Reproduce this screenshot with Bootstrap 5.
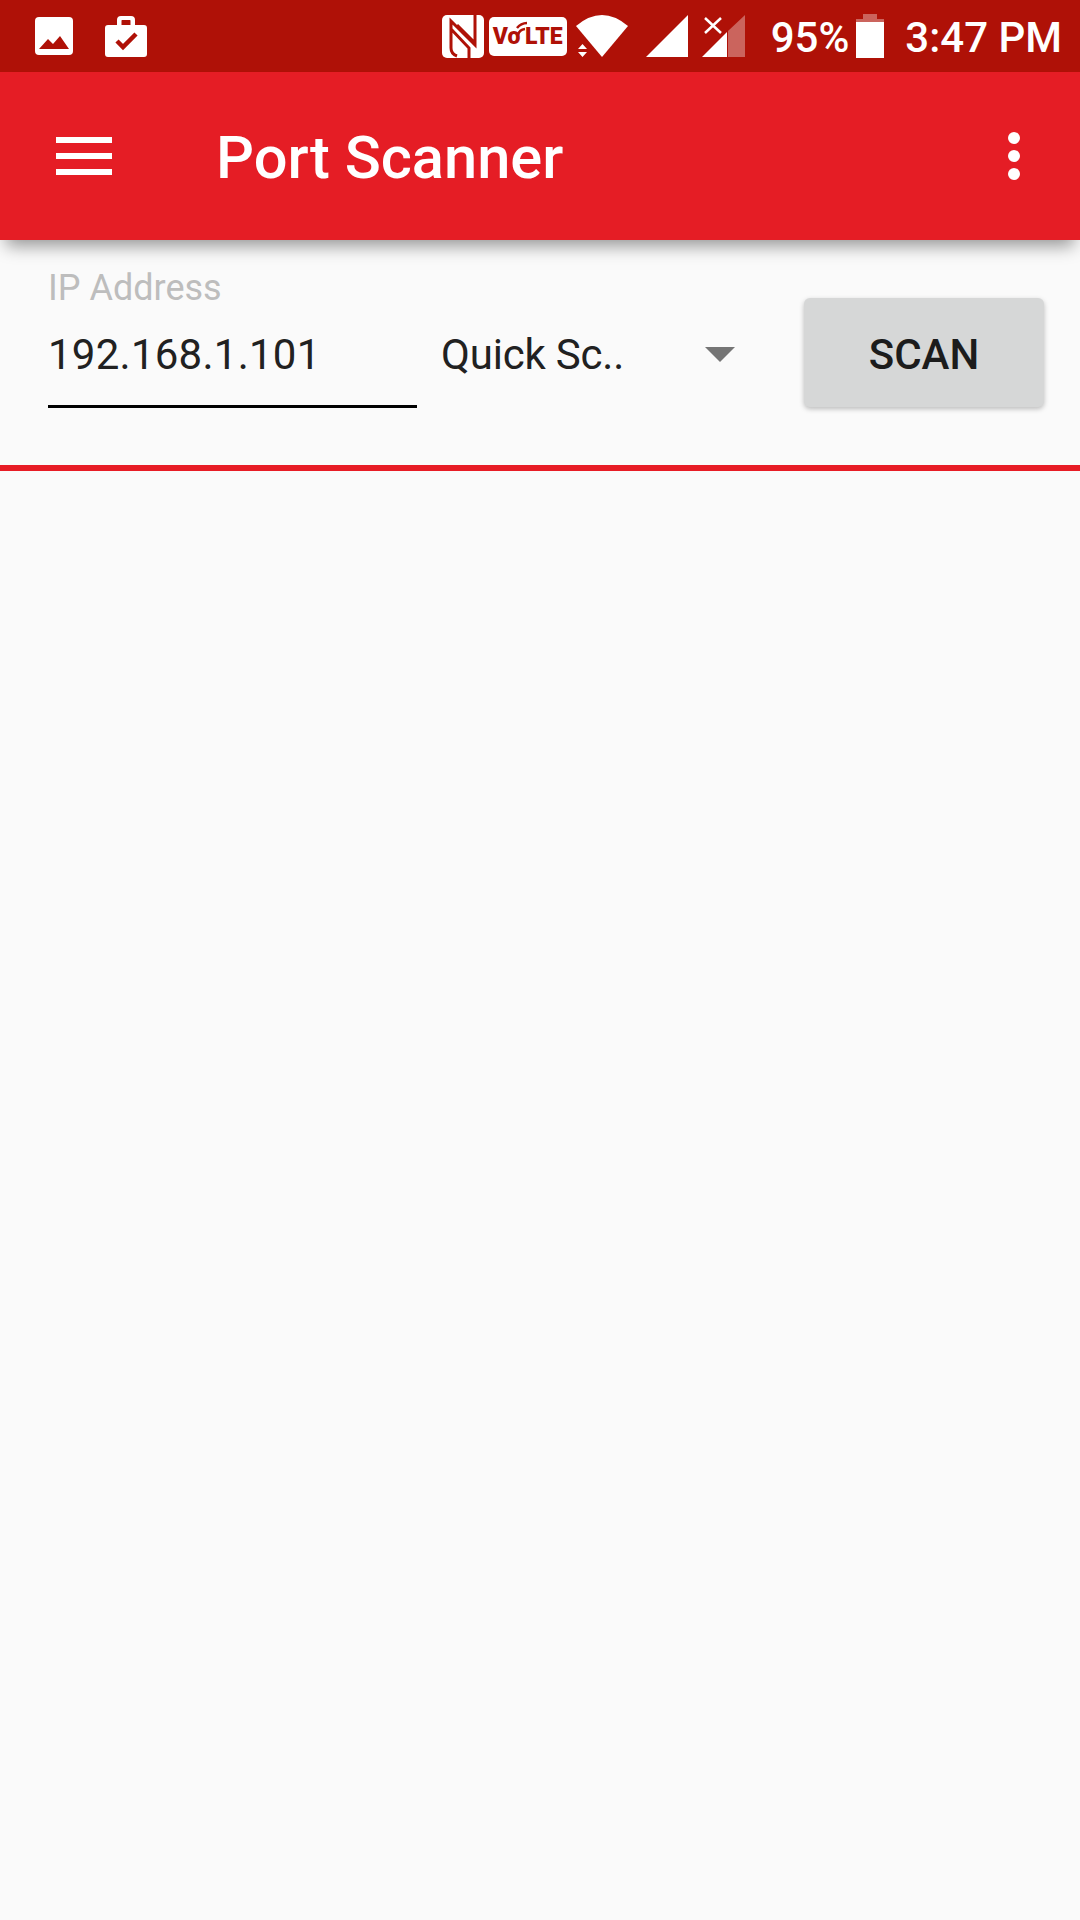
<!DOCTYPE html>
<html lang="en">

<head>
    <meta charset="UTF-8">
    <meta name="viewport" content="width=device-width, initial-scale=1.0">
    <title>Port Scanner</title>
    <link rel="stylesheet" href="https://cdn.jsdelivr.net/npm/bootstrap@5.3.0/dist/css/bootstrap.min.css">
    <style>
        html, body { height: 100%; }
        body { background: #fafafa; font-family: Roboto, "Liberation Sans", sans-serif; color: #212121; }
        svg { display: block; flex: none; }

        .status-bar { height: 72px; background: #af1107; color: #fff; padding: 0 18px 0 35px; }
        .status-text { font-size: 42px; line-height: 72px; font-weight: 500; white-space: nowrap; padding-top: 3px; }
        .brief-icon { margin-left: 32px; }
        .nfc-icon { margin-right: 5px; }
        .volte-box { width: 78px; height: 39px; background: #fff; border-radius: 5px; color: #af1107; font-size: 23px; font-weight: 900; line-height: 39px; margin-right: 9px; position: relative; white-space: nowrap; }
        .volte-waves { position: absolute; left: 25px; top: 3px; }
        .wifi-icon { margin-right: 18px; }
        .sig-icon { margin-right: 14px; }
        .percent-text { margin-left: 26px; }
        .batt-icon { margin-left: 7px; }
        .time-text { margin-left: 21px; }

        .app-bar { height: 168px; background: #e51d25; color: #fff; padding: 0 60px 0 56px; box-shadow: 0 12px 16px -6px rgba(0, 0, 0, .4); position: relative; }
        .app-title { font-size: 59.6px; font-weight: 500; line-height: 1; margin-left: 104px; padding-top: 6px; }

        .scan-form { padding: 26px 36px 57px 48px; border-bottom: 6px solid #e71c25; height: 231px; }
        .ip-field { width: 369px; }
        .ip-label { font-size: 36px; line-height: 45px; color: #bdbdbd; margin: 0; display: block; }
        .ip-input.form-control { font-size: 42px; letter-spacing: .25px; line-height: 56px; height: 97px; padding: 0 0 8px; border: 0; border-bottom: 3px solid #000; border-radius: 0; background: transparent; color: #212121; box-shadow: none; width: 369px; }
        .type-select { width: 387px; padding: 4px 0 0 24px; height: 109px; margin-bottom: 1px; }
        .type-text { font-size: 42px; letter-spacing: -.2px; line-height: 56px; color: #212121; width: 264px; white-space: nowrap; }
        .scan-btn.btn { width: 240px; height: 109px; background: #d6d7d7; color: #1c1c1c; font-size: 42px; font-weight: 500; border: 0; border-radius: 6px; padding: 4px 0 0; margin-bottom: 1px; box-shadow: 0 2px 5px rgba(0, 0, 0, .25); }
    </style>
</head>

<body>
    <div class="status-bar d-flex align-items-center">
        <svg width="38" height="38" viewBox="0 0 38 38">
            <rect width="38" height="38" rx="4" fill="#fff" />
            <path d="M4 32 13 22 18 27 25 19 34 32Z" fill="#af1107" />
        </svg>
        <svg class="brief-icon" width="42" height="41" viewBox="0 0 42 41">
            <path d="M3 9H12V4Q12 0 16 0H26Q30 0 30 4V9H39Q42 9 42 12V38Q42 41 39 41H3Q0 41 0 38V12Q0 9 3 9ZM17 4Q16.500 4 16.500 5V9H25.500V5Q25.500 4 25 4Z" fill="#fff" fill-rule="evenodd" />
            <path d="M12 25 18 31 31 18" fill="none" stroke="#af1107" stroke-width="4.500" />
        </svg>

        <div class="d-flex align-items-center ms-auto">
            <svg class="nfc-icon" width="42" height="43" viewBox="0 0 42 43">
                <rect width="42" height="43" rx="5" fill="#fff" />
                <path d="M15 41Q9 39 9 33V6L33 30V0M15 10 33 28M9 14 27 33V43" fill="none" stroke="#af1107" stroke-width="3" />
            </svg>
            <div class="volte-box d-flex align-items-center justify-content-center">Vo&#8202;&#8202;LTE
                <svg class="volte-waves" width="22" height="18" viewBox="0 0 22 18">
                    <path d="M4 15A8 8 0 0 1 11 9M3 8A13 13 0 0 1 13 3" fill="none" stroke="#af1107" stroke-width="2.500" />
                </svg>
            </div>
            <svg class="wifi-icon" width="52" height="42" viewBox="0 0 52 42">
                <path d="M0 11Q26 -11 52 11L26 42Z" fill="#fff" />
                <path d="M2 34 6.500 29 11 34ZM2 37H11L6.500 42Z" fill="#fff" />
            </svg>
            <svg class="sig-icon" width="42" height="42" viewBox="0 0 42 42">
                <path d="M0 42 42 0V42Z" fill="#fff" />
            </svg>
            <svg width="43" height="42" viewBox="0 0 43 42">
                <path d="M0 42 25 17V42Z" fill="#fff" />
                <path d="M26 16 43 0V42H26Z" fill="#fff" opacity=".35" />
                <path d="M3 3 19 18M19 3 3 18" fill="none" stroke="#fff" stroke-width="2.500" />
            </svg>
            <span class="status-text percent-text">95%</span>
            <svg class="batt-icon" width="28" height="44" viewBox="0 0 28 44">
                <path d="M7 0H21V5H28V44H0V5H7Z" fill="#fff" opacity=".35" />
                <rect y="8" width="28" height="36" fill="#fff" />
            </svg>
            <span class="status-text time-text">3:47 PM</span>
        </div>
    </div>

    <nav class="app-bar d-flex align-items-center">
        <svg width="56" height="38" viewBox="0 0 56 38">
            <path d="M0 0H56V6H0ZM0 16H56V22H0ZM0 32H56V38H0Z" fill="#fff" />
        </svg>
        <span class="app-title">Port Scanner</span>
        <svg class="ms-auto" width="12" height="48" viewBox="0 0 12 48">
            <circle cx="6" cy="6" r="6" fill="#fff" />
            <circle cx="6" cy="24" r="6" fill="#fff" />
            <circle cx="6" cy="42" r="6" fill="#fff" />
        </svg>
    </nav>

    <form class="scan-form d-flex">
        <div class="ip-field">
            <label class="ip-label" for="ipAddress">IP Address</label>
            <input type="text" class="form-control ip-input" id="ipAddress" value="192.168.1.101">
        </div>
        <div class="type-select d-flex align-items-center mt-auto">
            <span class="type-text">Quick Sc..</span>
            <svg width="30" height="15" viewBox="0 0 30 15">
                <path d="M0 0H30L15 15Z" fill="#757575" />
            </svg>
        </div>
        <button type="button" class="btn scan-btn mt-auto">SCAN</button>
    </form>

    <script src="https://cdn.jsdelivr.net/npm/bootstrap@5.3.0/dist/js/bootstrap.bundle.min.js"></script>
</body>

</html>
